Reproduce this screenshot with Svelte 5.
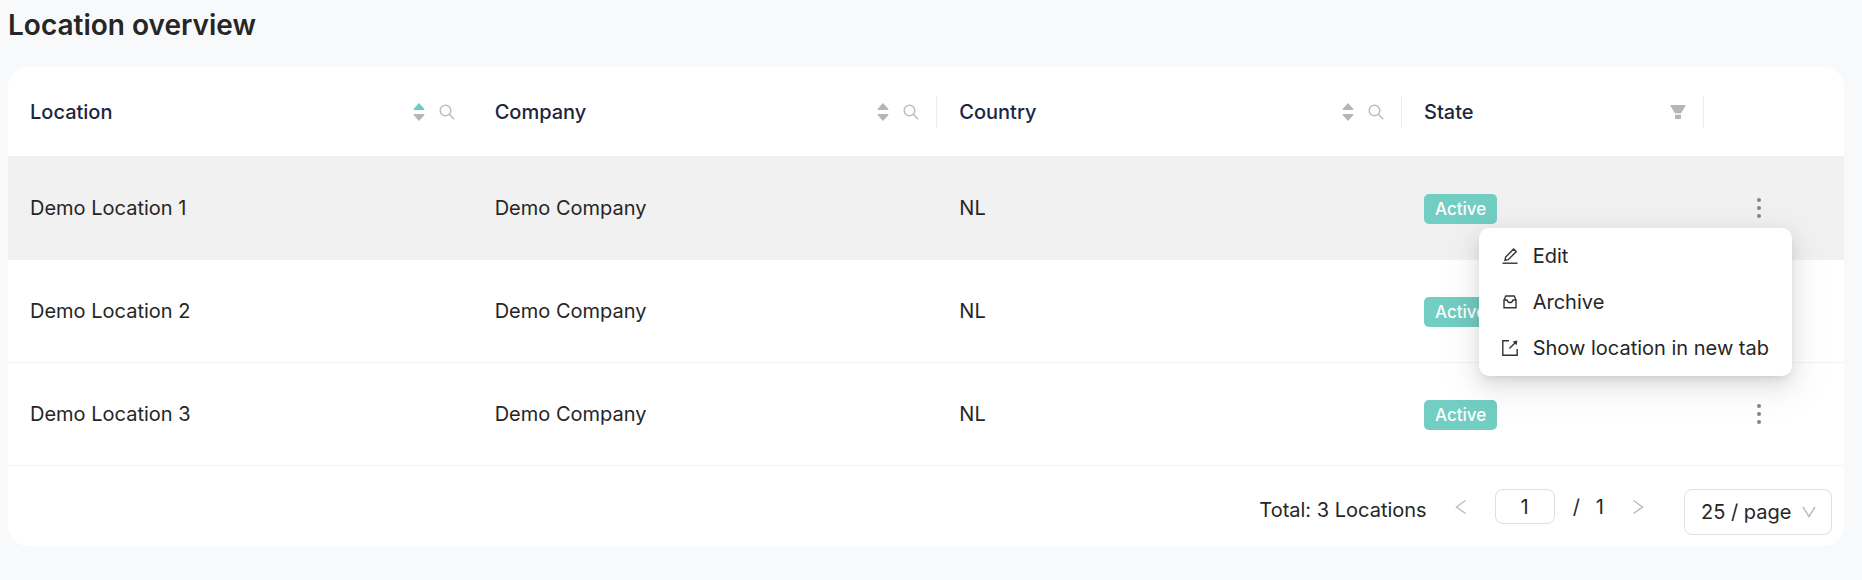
<script>
	const columns = [
		{ key: "location", title: "Location", sorted: "asc" },
		{ key: "company", title: "Company", divider: true },
		{ key: "country", title: "Country", divider: true }
	];

	const rows = [
		{ id: 1, location: "Demo Location 1", company: "Demo Company", country: "NL", state: "Active" },
		{ id: 2, location: "Demo Location 2", company: "Demo Company", country: "NL", state: "Active" },
		{ id: 3, location: "Demo Location 3", company: "Demo Company", country: "NL", state: "Active" }
	];

	let openRow = 1;
	let page = 1;
	let pageSize = "25";

	function toggleMenu(id) {
		openRow = openRow === id ? null : id;
	}
</script>

<main>
	<h1>Location overview</h1>

	<div class="card">
		<table>
			<thead>
				<tr>
					{#each columns as col}
						<th class:divider={col.divider}>
							<div class="head">
								<span>{col.title}</span>
								<div class="tools">
									<button class="icon" aria-label="Sort by {col.title}">
										<svg width="12" height="20" viewBox="0 0 12 20">
											<path class:on={col.sorted === "asc"} d="M6 1 L11.4 7 Q11.6 8 11 8 H1 Q.4 8 .6 7 Z" />
											<path d="M6 19 L11.4 13 Q11.6 12 11 12 H1 Q.4 12 .6 13 Z" />
										</svg>
									</button>
									<button class="icon" aria-label="Search {col.title}">
										<svg class="line" width="16" height="16" viewBox="0 0 16 16">
											<circle cx="6.5" cy="6.5" r="5.3" />
											<path d="M10.3 10.3 L15.2 15.2" />
										</svg>
									</button>
								</div>
							</div>
						</th>
					{/each}
					<th class="state divider">
						<div class="head">
							<span>State</span>
							<div class="tools">
								<button class="icon" aria-label="Filter State">
									<svg width="16" height="16" viewBox="0 0 16 16">
										<path d="M1 1 H15 Q16 1 15.5 2 L11 9.3 H5 L.5 2 Q0 1 1 1 Z" />
										<path d="M5 10.8 H11 V14 Q11 15 10.2 15 H5.8 Q5 15 5 14 Z" />
									</svg>
								</button>
							</div>
						</div>
					</th>
					<th class="actions"></th>
				</tr>
			</thead>
			<tbody>
				{#each rows as row}
					<tr class:active={openRow === row.id}>
						<td>{row.location}</td>
						<td>{row.company}</td>
						<td>{row.country}</td>
						<td><span class="badge">{row.state}</span></td>
						<td>
							<div class="more">
								<button class="dots" aria-label="Actions for {row.location}" on:click={() => toggleMenu(row.id)}>
									<svg width="20" height="20" viewBox="0 0 20 20">
										<circle cx="10" cy="2" r="2" />
										<circle cx="10" cy="10" r="2" />
										<circle cx="10" cy="18" r="2" />
									</svg>
								</button>

								{#if openRow === row.id}
									<div class="menu">
										<button>
											<svg width="16" height="16" viewBox="0 0 16 16">
												<path d="M.5 15.2 H15.5" />
												<path d="M3 12.3 L3.6 9.1 L11.6 1.1 L14.2 3.7 L6.2 11.7 Z" />
											</svg>
											Edit
										</button>
										<button>
											<svg width="16" height="16" viewBox="0 0 16 16">
												<path d="M2 6 L3.8 2 H12.2 L14 6 V13.8 H2 Z" />
												<path d="M2 6 H5 Q5.8 8.6 8 8.6 Q10.2 8.6 11 6 H14" />
											</svg>
											Archive
										</button>
										<button>
											<svg width="16" height="16" viewBox="0 0 16 16">
												<path d="M7 .8 H.8 V15.2 H15.2 V9" />
												<path d="M7.4 8.6 L14 2" />
												<path class="tip" d="M10.8 1.4 L15.4 .6 L14.6 5.2 Z" />
											</svg>
											Show location in new tab
										</button>
									</div>
								{/if}
							</div>
						</td>
					</tr>
				{/each}
			</tbody>
		</table>

		<div class="footer">
			<span class="total">Total: {rows.length} Locations</span>
			<div class="pager">
				<button class="icon" aria-label="Previous page" disabled>
					<svg class="line" width="12" height="16" viewBox="0 0 12 16"><path d="M10.5 1.5 L1.5 8 L10.5 14.5" /></svg>
				</button>
				<input aria-label="Page" bind:value={page} />
				<span>/</span>
				<span>1</span>
				<button class="icon" aria-label="Next page" disabled>
					<svg class="line" width="12" height="16" viewBox="0 0 12 16"><path d="M1.5 1.5 L10.5 8 L1.5 14.5" /></svg>
				</button>
			</div>
			<div class="size">
				<select aria-label="Page size" bind:value={pageSize}>
					<option value="25">25 / page</option>
					<option value="50">50 / page</option>
				</select>
				<svg class="line" width="14" height="12" viewBox="0 0 14 12"><path d="M1 1 L7 10.5 L13 1" /></svg>
			</div>
		</div>
	</div>
</main>

<style>
	:global(body) {
		background: #f8f9fb;
	}

	main {
		padding: 5px 18px 32px 8px;
		font-family: Inter, sans-serif;
		font-size: 20px;
		line-height: 32px;
		color: #262626;
	}

	h1 {
		margin: 0 0 22px;
		font-size: 28px;
		font-weight: 600;
		line-height: 40px;
	}

	button {
		font: inherit;
		color: inherit;
		background: none;
		border: none;
		padding: 0;
		cursor: pointer;
	}

	svg {
		display: block;
		flex: none;
	}

	.card {
		background: #fff;
		border-radius: 20px;
	}

	table {
		width: 100%;
		table-layout: fixed;
		border-collapse: separate;
		border-spacing: 0;
	}

	th {
		position: relative;
		height: 89px;
		padding: 0 16px 0 22px;
		font-weight: 500;
		text-align: left;
		color: #1c2540;
		border-bottom: 1px solid #f0f0f0;
	}

	.divider::after {
		content: "";
		position: absolute;
		top: 29px;
		right: 0;
		width: 1px;
		height: 32px;
		background: #ececec;
	}

	.state {
		width: 264px;
	}

	.actions {
		width: 102px;
	}

	.head {
		display: flex;
		justify-content: space-between;
		align-items: center;
	}

	.tools {
		display: flex;
		align-items: center;
		gap: 14px;
		padding-right: 2px;
	}

	.icon {
		fill: #b5b5b5;
	}

	.line {
		fill: none;
		stroke: #bdbdbd;
		stroke-width: 1.5;
	}

	.on {
		fill: #6accc1;
	}

	td {
		height: 103px;
		box-sizing: border-box;
		padding: 0 22px;
		border-bottom: 1px solid #f3f3f4;
	}

	.active td {
		background: #f1f1f1;
	}

	.badge {
		display: inline-block;
		padding: 0 11px;
		border-radius: 5px;
		background: #72cdc2;
		color: #fff;
		font-size: 17px;
		font-weight: 500;
		line-height: 30px;
		vertical-align: middle;
	}

	.more {
		position: relative;
		width: 66px;
	}

	.dots {
		display: grid;
		place-items: center;
		width: 100%;
		height: 36px;
		fill: #858585;
	}

	.menu {
		position: absolute;
		top: 38px;
		right: 0;
		z-index: 1;
		padding: 5px;
		border-radius: 10px;
		background: #fff;
		box-shadow: 0 8px 20px rgba(0, 0, 0, .1), 0 4px 8px -4px rgba(0, 0, 0, .12), 0 10px 38px 10px rgba(0, 0, 0, .05);
	}

	.menu button {
		display: flex;
		align-items: center;
		gap: 15px;
		width: 100%;
		height: 46px;
		padding: 0 18px;
		white-space: nowrap;
	}

	.menu svg {
		fill: none;
		stroke: #333;
		stroke-width: 1.4;
	}

	.menu .tip {
		fill: #333;
		stroke: none;
	}

	.footer {
		display: flex;
		justify-content: flex-end;
		align-items: flex-start;
		padding: 23px 12px 11px;
	}

	.total {
		padding: 5px 0;
	}

	.pager {
		display: flex;
		align-items: center;
		margin: 0 40px 0 28px;
	}

	.pager span {
		margin-right: 16px;
	}

	input {
		box-sizing: border-box;
		width: 60px;
		height: 35px;
		margin: 0 18px 0 28px;
		padding: 0;
		border: 1px solid #dedede;
		border-radius: 8px;
		font: inherit;
		color: inherit;
		text-align: center;
	}

	.pager button:last-child {
		margin-left: 12px;
	}

	.size {
		position: relative;
	}

	select {
		appearance: none;
		display: block;
		box-sizing: border-box;
		width: 148px;
		height: 46px;
		padding: 0 16px;
		border: 1px solid #dedede;
		border-radius: 8px;
		background: #fff;
		font: inherit;
		color: inherit;
	}

	.size svg {
		position: absolute;
		top: 17px;
		right: 16px;
		pointer-events: none;
	}
</style>
